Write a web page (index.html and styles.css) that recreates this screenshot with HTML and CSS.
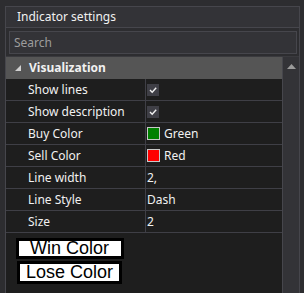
FILE: index.html
```html
<!DOCTYPE html>
<html lang="en">
<head>
  <meta charset="UTF-8">
  <title>Indicator settings</title>
  <link rel="stylesheet" href="styles.css">
</head>
<body>
  <div class="panel">
    <div class="title">Indicator settings</div>
    <div class="search-wrap">
      <div class="search">Search</div>
    </div>
    <div class="grid-wrap">
      <div class="grid">
        <div class="category">
          <svg class="expander" width="6" height="6" viewBox="0 0 6 6"><path d="M6 0 L6 6 L0 6 Z" fill="#d0d0d0"/></svg>
          Visualization
        </div>
        <div class="row">
          <div class="name">Show lines</div>
          <div class="value"><span class="check"><svg width="10" height="10" viewBox="0 0 10 10"><path d="M2 5 L4.2 7.2 L8.2 2.8" fill="none" stroke="#f0f0f0" stroke-width="1.4"/></svg></span></div>
        </div>
        <div class="row">
          <div class="name">Show description</div>
          <div class="value"><span class="check"><svg width="10" height="10" viewBox="0 0 10 10"><path d="M2 5 L4.2 7.2 L8.2 2.8" fill="none" stroke="#f0f0f0" stroke-width="1.4"/></svg></span></div>
        </div>
        <div class="row">
          <div class="name">Buy Color</div>
          <div class="value"><span class="swatch green"></span>Green</div>
        </div>
        <div class="row">
          <div class="name">Sell Color</div>
          <div class="value"><span class="swatch red"></span>Red</div>
        </div>
        <div class="row">
          <div class="name">Line width</div>
          <div class="value">2,</div>
        </div>
        <div class="row">
          <div class="name">Line Style</div>
          <div class="value">Dash</div>
        </div>
        <div class="row">
          <div class="name">Size</div>
          <div class="value">2</div>
        </div>
        <div class="buttons">
          <div class="color-btn win">Win Color</div>
          <div class="color-btn lose">Lose Color</div>
        </div>
      </div>
      <div class="scrollbar">
        <svg width="9" height="5" viewBox="0 0 9 5"><path d="M4.5 0 L9 5 L0 5 Z" fill="#9a9a9a"/></svg>
      </div>
    </div>
  </div>
</body>
</html>
```

FILE: styles.css
```css
html, body {
  margin: 0;
  height: 100%;
}
body {
  background: #2d2d30;
  font-family: "Noto Sans", sans-serif;
  font-size: 12px;
  color: #f1f1f1;
  padding: 6px 4px 0 5px;
  box-sizing: border-box;
  overflow: hidden;
}
.panel {
  border: 1px solid #46464c;
  border-bottom: none;
  height: 100%;
  box-sizing: border-box;
  display: flex;
  flex-direction: column;
}
.title {
  height: 20px;
  line-height: 20px;
  padding-left: 11px;
  background: #333337;
  border-bottom: 1px solid #46464c;
}
.search-wrap {
  padding: 3px 2px 2px 3px;
  background: #2d2d30;
}
.search {
  height: 21px;
  line-height: 21px;
  border: 1px solid #46464c;
  background: #333337;
  color: #9d9d9d;
  padding-left: 4px;
}
.grid-wrap {
  flex: 1;
  display: flex;
  border-top: 1px solid #3a3a3e;
}
.grid {
  flex: 1;
  background: #1e1e1e;
}
.category {
  height: 22px;
  line-height: 22px;
  background: #555555;
  font-weight: bold;
  display: flex;
  align-items: center;
  gap: 8px;
  padding-left: 9px;
}
.row {
  display: flex;
  height: 21px;
  line-height: 21px;
  border-bottom: 1px solid #3f3f46;
}
.name {
  width: 117px;
  padding-left: 22px;
  border-right: 1px solid #3f3f46;
}
.value {
  flex: 1;
  padding-left: 1px;
  display: flex;
  align-items: center;
  gap: 4px;
}
.check {
  width: 12px;
  height: 12px;
  background: #3f3f46;
  display: flex;
  align-items: center;
  justify-content: center;
}
.swatch {
  width: 11px;
  height: 11px;
  border: 1px solid #c8c8c8;
}
.green {
  background: #008000;
}
.red {
  background: #ff0000;
}
.buttons {
  padding: 5px 0 0 10px;
  display: flex;
  flex-direction: column;
  align-items: flex-start;
  gap: 2px;
}
.color-btn {
  background: #ffffff;
  color: #000000;
  border: 3px solid #000000;
  font-family: "Liberation Sans", Arial, sans-serif;
  font-size: 18px;
  line-height: 15px;
}
.win {
  padding: 0 12px 0 11px;
}
.lose {
  margin-left: 1px;
  padding: 1px 6px;
}
.scrollbar {
  width: 16px;
  background: #333337;
  border-left: 1px solid #46464c;
  display: flex;
  justify-content: center;
  padding-top: 7px;
  align-items: flex-start;
}
```
